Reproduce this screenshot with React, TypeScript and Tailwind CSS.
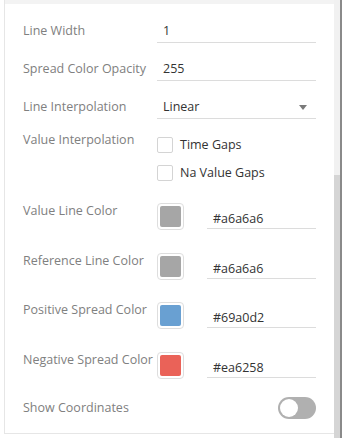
import React from "react";

const textRows = [
  { label: "Line Width", value: "1" },
  { label: "Spread Color Opacity", value: "255" },
];

const colorRows = [
  { label: "Value Line Color", color: "#a6a6a6" },
  { label: "Reference Line Color", color: "#a6a6a6" },
  { label: "Positive Spread Color", color: "#69a0d2" },
  { label: "Negative Spread Color", color: "#ea6258" },
];

function Checkbox({ label }: { label: string }) {
  return (
    <label className="flex h-[18px] items-center gap-[7px]">
      <span className="h-[16px] w-[16px] rounded-[2px] border border-[#d4d4d4] bg-white" />
      <span className="text-[#333]">{label}</span>
    </label>
  );
}

export default function App() {
  return (
    <div
      className="flex h-[438px] w-[345px] whitespace-nowrap bg-white text-[12.5px] leading-[18px]"
      style={{ fontFamily: '"Open Sans", "Liberation Sans", sans-serif' }}
    >
      <div className="w-[4px]" />

      {/* Panel */}
      <div className="flex w-[330px] flex-col">
        <div className="flex h-[434px] flex-col border-b border-l border-[#e6e6e6]">
          <div className="h-[4px] bg-[#f3f3f3]" />
          <div className="flex flex-col pl-[18px] pr-[18px] pt-[1px]">
            {textRows.map((row) => (
              <div key={row.label} className="flex h-[38px] items-end">
                <div className="w-[134px] pb-[3px] text-[#808080]">{row.label}</div>
                <div className="flex-1 border-b border-[#dcdcdc] pb-[2px] pl-[6px] text-[#333]">
                  {row.value}
                </div>
              </div>
            ))}

            <div className="flex h-[38px] items-end">
              <div className="w-[134px] pb-[3px] text-[#808080]">Line Interpolation</div>
              <div className="flex flex-1 items-center justify-between border-b border-[#dcdcdc] pb-[2px] pl-[6px] pr-[9px] text-[#333]">
                <span>Linear</span>
                <svg width="8" height="5" viewBox="0 0 8 5">
                  <path d="M0 0 L8 0 L4 5 Z" fill="#7a7a7a" />
                </svg>
              </div>
            </div>

            {/* Value Interpolation */}
            <div className="flex pt-[12px]">
              <div className="w-[134px] text-[#808080]">Value Interpolation</div>
              <div className="flex flex-col gap-[10px] pt-[5px]">
                <Checkbox label="Time Gaps" />
                <Checkbox label="Na Value Gaps" />
              </div>
            </div>

            {/* Color rows */}
            <div className="mt-[21px] flex flex-col gap-[22.7px]">
              {colorRows.map((row) => (
                <div key={row.label} className="flex h-[27px] items-start">
                  <div className="-mt-[1px] w-[134px] text-[#808080]">{row.label}</div>
                  <div className="flex h-[27px] w-[27px] items-center justify-center rounded-[4px] border border-[#dedede] bg-white">
                    <div
                      className="h-[21px] w-[21px] rounded-[2px]"
                      style={{ backgroundColor: row.color }}
                    />
                  </div>
                  <div className="ml-[23px] flex h-[26px] flex-1 items-end border-b border-[#dcdcdc] pl-[6px] text-[#333]">
                    {row.color}
                  </div>
                </div>
              ))}
            </div>

            {/* Show Coordinates */}
            <div className="mt-[18px] flex h-[22px] items-center justify-between">
              <div className="text-[#808080]">Show Coordinates</div>
              <div className="flex h-[22px] w-[38px] items-center rounded-full bg-[#b0b0b0] px-[2px]">
                <div className="h-[18px] w-[18px] rounded-full bg-white" />
              </div>
            </div>
          </div>
        </div>
      </div>

      {/* Scrollbar */}
      <div className="flex w-[6px] flex-col bg-[#f1f1f1]">
        <div className="mt-[175px] flex-1 bg-[#d5d5d5]" />
      </div>
      <div className="w-[2px] bg-[#8a8a8a]" />
      <div className="w-[3px] bg-white" />
    </div>
  );
}
